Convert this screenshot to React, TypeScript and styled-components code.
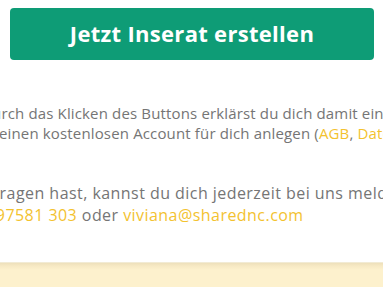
import React from "react";
import styled, { createGlobalStyle } from "styled-components";

const GlobalStyle = createGlobalStyle`
  html, body {
    margin: 0;
    padding: 0;
    background: #ffffff;
    overflow: hidden;
  }
  body {
    font-family: "Open Sans", "Noto Sans", Arial, sans-serif;
    -webkit-font-smoothing: antialiased;
  }
`;

const Page = styled.div`
  display: flex;
  flex-direction: column;
  width: 383px;
  height: 287px;
  overflow: hidden;
`;

const ButtonRow = styled.div`
  padding: 8px 9px 0 10px;
`;

const CreateButton = styled.button`
  display: flex;
  align-items: center;
  justify-content: center;
  width: 100%;
  height: 52px;
  border: none;
  border-radius: 4px;
  background: #0e9c76;
  color: #ffffff;
  font-family: "Open Sans", "Noto Sans", Arial, sans-serif;
  font-weight: 700;
  font-size: 22px;
  letter-spacing: 0.3px;
  padding: 0 0 2px 0;
  cursor: pointer;
`;

const Paragraph = styled.div<{ $size: number; $lh: number; $top: number; $ls: number }>`
  margin-top: ${(p) => p.$top}px;
  font-size: ${(p) => p.$size}px;
  line-height: ${(p) => p.$lh}px;
  letter-spacing: ${(p) => p.$ls}px;
  color: #757575;
  display: flex;
  flex-direction: column;
`;

const Line = styled.span<{ $shift: number }>`
  display: block;
  white-space: nowrap;
  margin-left: ${(p) => p.$shift}px;
`;

const Link = styled.a`
  color: #f3c22f;
  text-decoration: none;
`;

const Band = styled.div`
  margin-top: 36px;
  flex: 1;
  background: linear-gradient(
    to bottom,
    #f7f6ee 0px,
    #ede0bb 1px,
    #f7e9c4 4px,
    #fdf1cd 8px,
    #fdf1cd 100%
  );
`;

export default function App() {
  return (
    <>
      <GlobalStyle />
      <Page>
        <ButtonRow>
          <CreateButton>Jetzt Inserat erstellen</CreateButton>
        </ButtonRow>
        <Paragraph $size={15} $lh={20} $top={43} $ls={0.15}>
          <Line $shift={-19}>
            Durch das Klicken des Buttons erklärst du dich damit einverstanden, dass wir
          </Line>
          <Line $shift={-1}>
            einen kostenlosen Account für dich anlegen (<Link href="#">AGB</Link>,{" "}
            <Link href="#">Datenschutz</Link>).
          </Line>
        </Paragraph>
        <Paragraph $size={16} $lh={22} $top={39} $ls={0.45}>
          <Line $shift={-84}>
            Wenn du Fragen hast, kannst du dich jederzeit bei uns melden:
          </Line>
          <Line $shift={-71}>
            <Link href="#">+49 176 97581 303</Link> oder{" "}
            <Link href="#">viviana@sharednc.com</Link>
          </Line>
        </Paragraph>
        <Band />
      </Page>
    </>
  );
}
